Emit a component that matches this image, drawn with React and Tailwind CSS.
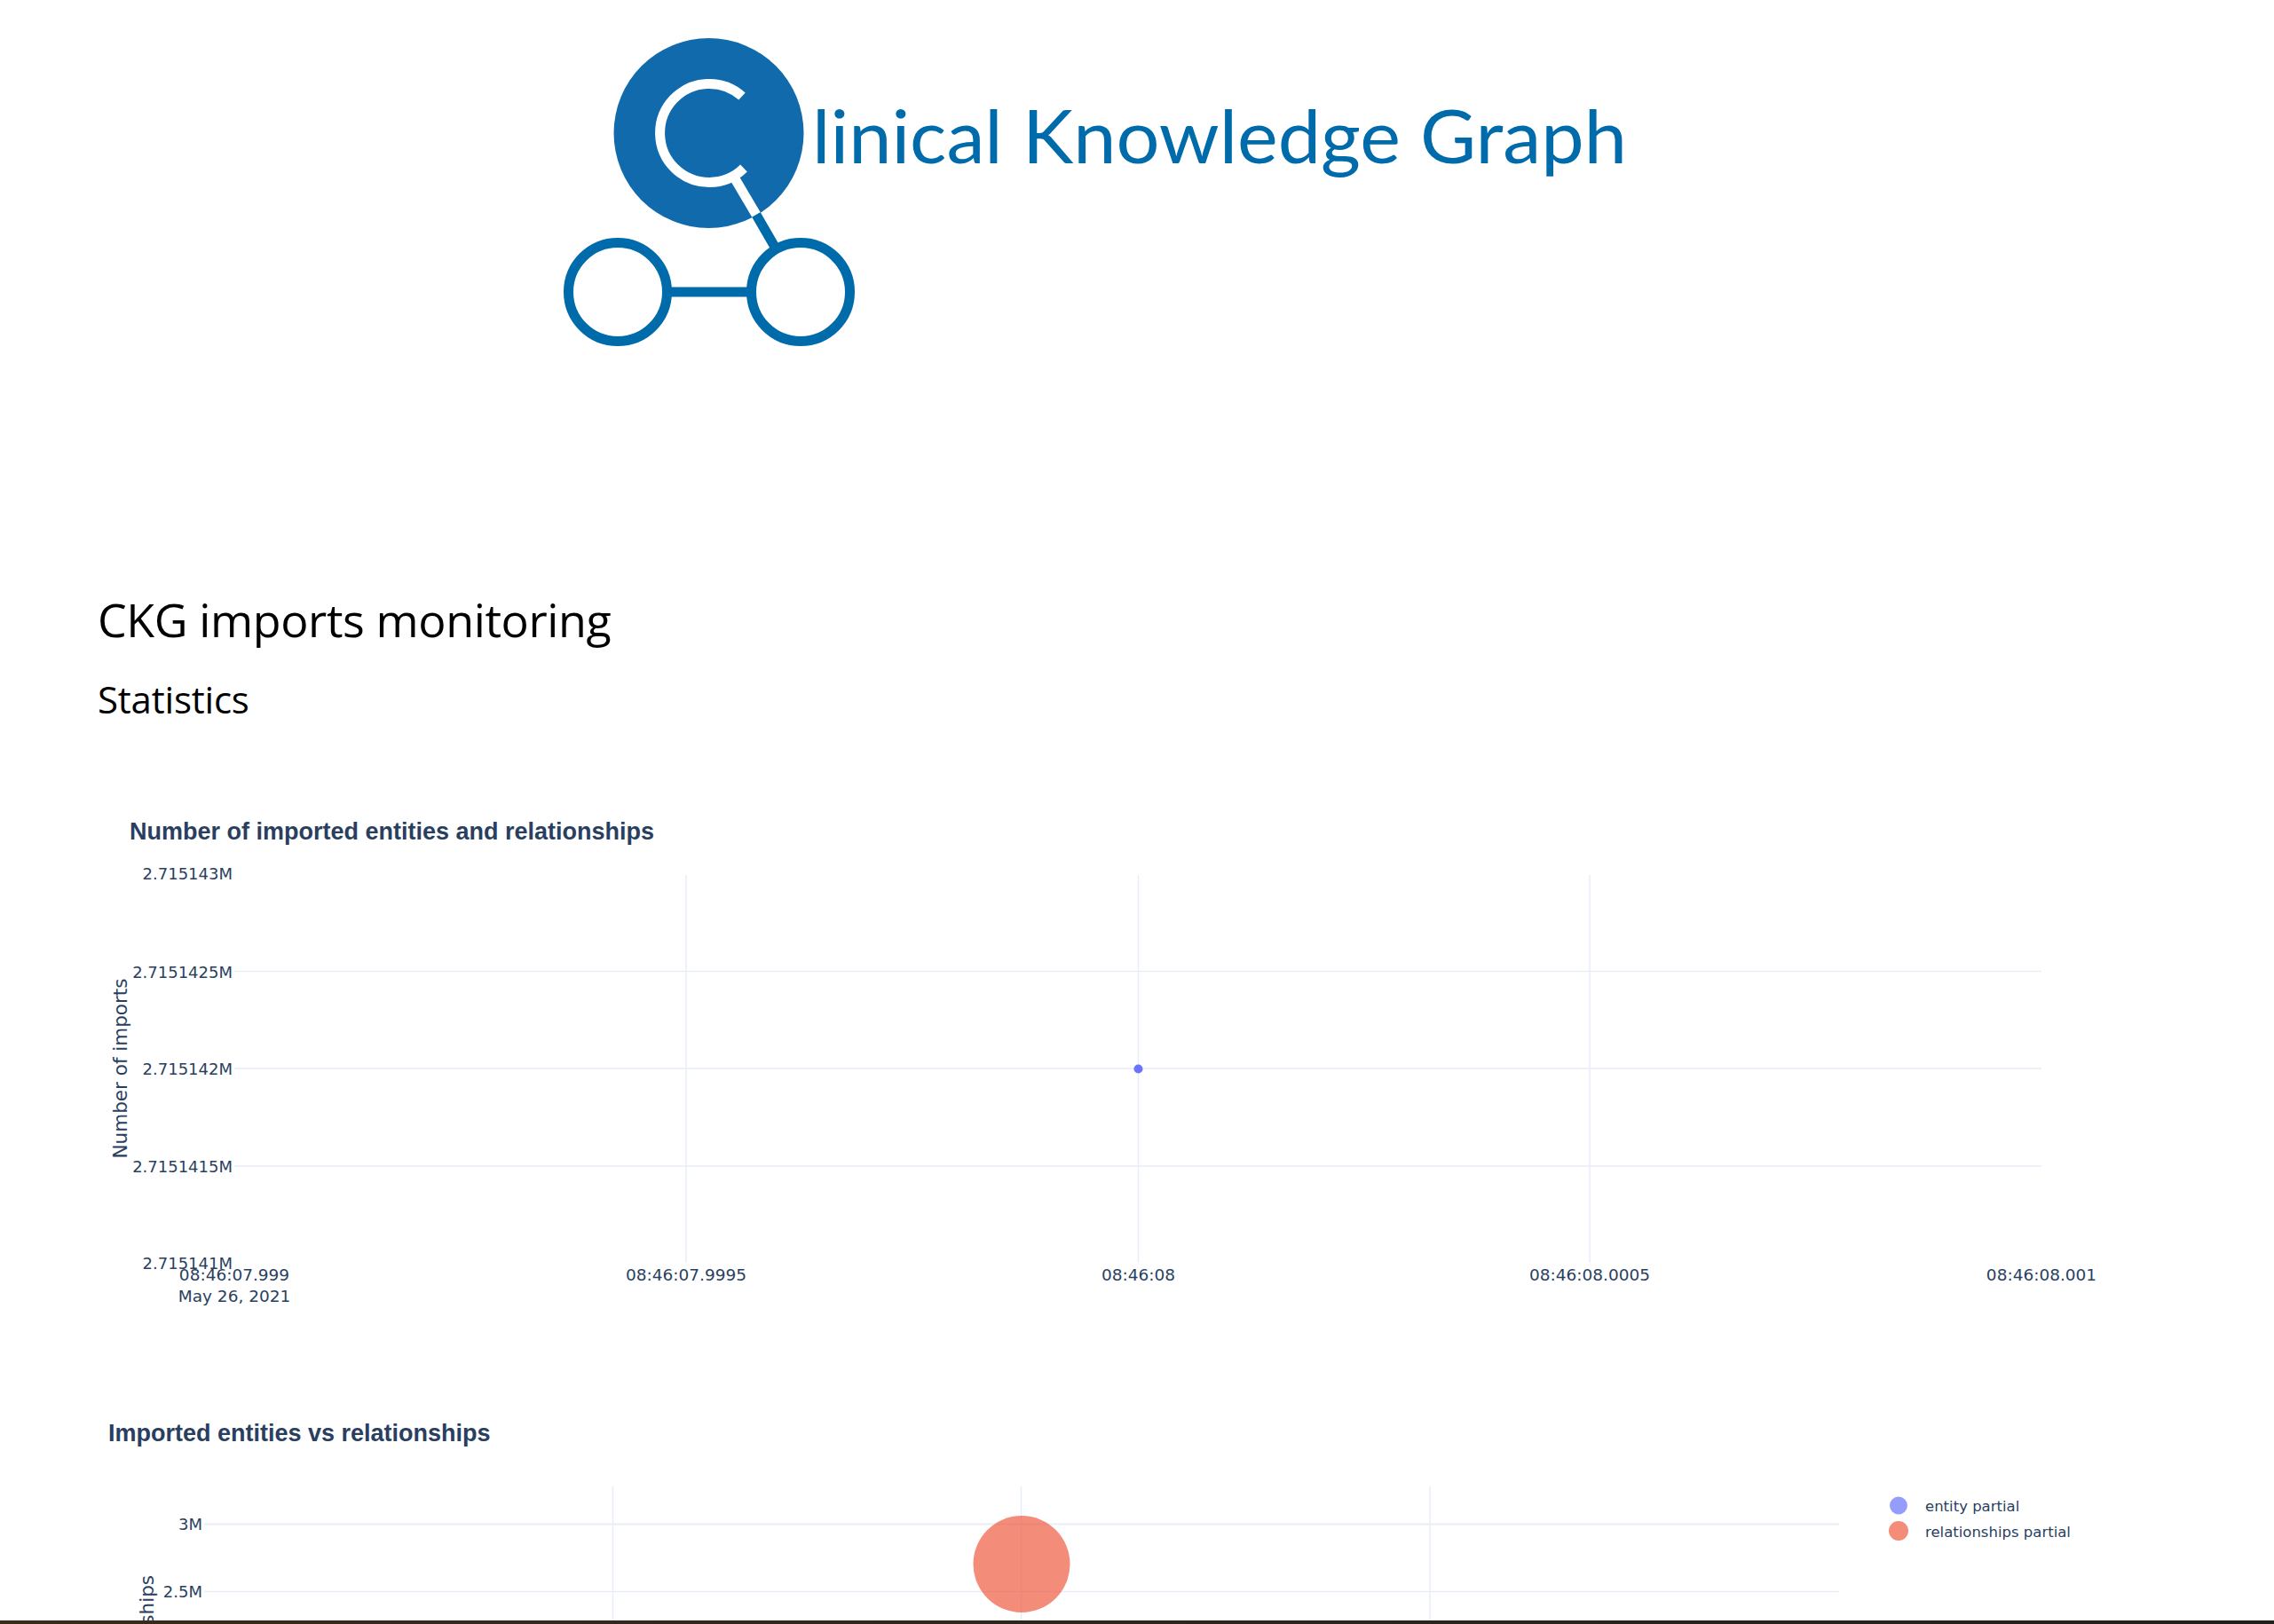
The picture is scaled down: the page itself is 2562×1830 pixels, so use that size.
import React from "react";

const tick = "[font-family:'DejaVu_Sans',sans-serif] text-[18.5px] fill-[#2a3f5f]";
const yTick = "[font-family:'DejaVu_Sans',sans-serif] text-[18px] fill-[#2a3f5f]";
const axisTitle = "[font-family:'DejaVu_Sans',sans-serif] text-[21.5px] fill-[#2a3f5f]";
const legend = "[font-family:'DejaVu_Sans',sans-serif] text-[16.5px] fill-[#2a3f5f]";
const title = "[font-family:'Liberation_Sans',sans-serif] font-bold text-[27px] fill-[#2a3f5f]";
const grid = "#e8edf7";

const Logo = () => (
  <svg viewBox="0 0 2562 660" className="block w-full h-[660px]">
    <circle cx="798.500" cy="150" r="107" fill="#116aab" />
    <path d="M 836 108.500 A 55.500 55.500 0 1 0 838 189.500" fill="none" stroke="#fff" strokeWidth="11" />
    <path d="M 826 198 L 852 242" stroke="#fff" strokeWidth="11" />
    <path d="M 852 242 L 874 280" stroke="#006bab" strokeWidth="11" />
    <circle cx="696" cy="329" r="55.500" fill="none" stroke="#006bab" strokeWidth="11" />
    <circle cx="902" cy="329" r="55.500" fill="none" stroke="#006bab" strokeWidth="11" />
    <path d="M 752 329 L 846 329" stroke="#006bab" strokeWidth="11" />
    <text x="915" y="184" textLength="918" lengthAdjust="spacingAndGlyphs" className="[font-family:'Lato',sans-serif] text-[84px] fill-[#006bab]">
      linical Knowledge Graph
    </text>
  </svg>
);

const LinesChart = () => {
  const xs = [
    [264, "08:46:07.999"],
    [773, "08:46:07.9995"],
    [1282.500, "08:46:08"],
    [1791, "08:46:08.0005"],
    [2300, "08:46:08.001"],
  ];
  const ys = [
    [984, "2.715143M"],
    [1094.500, "2.7151425M"],
    [1204, "2.715142M"],
    [1314, "2.7151415M"],
    [1423, "2.715141M"],
  ];
  return (
    <svg viewBox="0 900 2562 600" className="block w-full h-[600px]">
      <text x="146" y="945.500" className={title}>
        Number of imported entities and relationships
      </text>
      {xs.slice(1, 4).map(([x]) => (
        <line key={x} x1={x} x2={x} y1="986" y2="1423" stroke={grid} strokeWidth="1.500" />
      ))}
      {ys.slice(1, 4).map(([y]) => (
        <line key={y} x1="264" x2="2300" y1={y} y2={y} stroke={grid} strokeWidth="1.500" />
      ))}
      {ys.map(([y, label]) => (
        <text key={label} x="262" y={y + 7} textAnchor="end" className={yTick}>{label}</text>
      ))}
      {xs.map(([x, label]) => (
        <text key={label} x={x} y="1443" textAnchor="middle" className={tick}>{label}</text>
      ))}
      <text x="264" y="1467" textAnchor="middle" className={tick}>May 26, 2021</text>
      <text x="0" y="0" transform="translate(143 1204) rotate(-90)" textAnchor="middle" className={axisTitle}>
        Number of imports
      </text>
      <circle cx="1282.500" cy="1204.500" r="5" fill="#636efa" fillOpacity="0.95" />
    </svg>
  );
};

const BubbleChart = () => (
  <svg viewBox="0 1500 2562 326" className="block w-full h-[326px]">
    <text x="122" y="1623.500" className={title}>
      Imported entities vs relationships
    </text>
    {[690.500, 1150.500, 1611].map((x) => (
      <line key={x} x1={x} x2={x} y1="1675" y2="1826" stroke={grid} strokeWidth="1.500" />
    ))}
    <line x1="230" x2="2072" y1="1717.500" y2="1717.500" stroke={grid} strokeWidth="2" />
    <line x1="230" x2="2072" y1="1793.500" y2="1793.500" stroke={grid} strokeWidth="1.500" />
    <text x="228" y="1724" textAnchor="end" className={yTick}>3M</text>
    <text x="228" y="1800" textAnchor="end" className={yTick}>2.5M</text>
    <text x="0" y="0" transform="translate(173 1775) rotate(-90)" textAnchor="end" className={axisTitle}>
      relationships
    </text>
    <circle cx="1151" cy="1762.500" r="54.500" fill="#ef553b" fillOpacity="0.68" />
    <circle cx="2139" cy="1696.500" r="10" fill="#636efa" fillOpacity="0.68" />
    <circle cx="2139" cy="1725" r="11" fill="#ef553b" fillOpacity="0.68" />
    <text x="2169" y="1702.500" className={legend}>entity partial</text>
    <text x="2169" y="1731.500" className={legend}>relationships partial</text>
  </svg>
);

export default function App() {
  return (
    <div className="flex flex-col h-[1830px] overflow-hidden bg-white">
      <div className="flex-1 overflow-hidden">
        <Logo />
        <div className="px-[110px]">
          <h1 className="h-[76px] [font-family:'Open_Sans',sans-serif] text-[52px] leading-[76px] font-normal text-black tracking-[-0.4px]">
            CKG imports monitoring
          </h1>
          <h2 className="mt-[12px] mb-[72px] h-[80px] [font-family:'Open_Sans',sans-serif] text-[42px] leading-[80px] font-normal text-black tracking-[-0.2px]">
            Statistics
          </h2>
        </div>
        <LinesChart />
        <BubbleChart />
      </div>
      <div className="h-[4px] bg-linear-to-r from-[#3a2b1b] to-[#22201a]" />
    </div>
  );
}
